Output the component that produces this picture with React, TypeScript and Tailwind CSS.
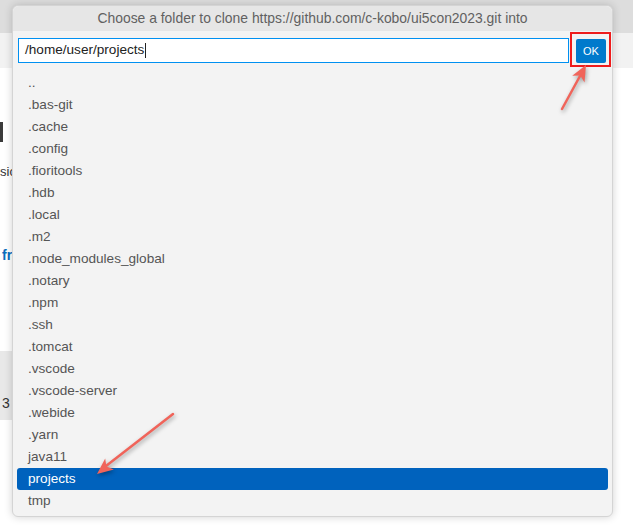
import React from "react";

const folders = [
  "..",
  ".bas-git",
  ".cache",
  ".config",
  ".fioritools",
  ".hdb",
  ".local",
  ".m2",
  ".node_modules_global",
  ".notary",
  ".npm",
  ".ssh",
  ".tomcat",
  ".vscode",
  ".vscode-server",
  ".webide",
  ".yarn",
  "java11",
  "projects",
  "tmp",
];

const Arrows = () => (
  <svg
    className="absolute inset-0 pointer-events-none drop-shadow-[1px_2px_2px_rgba(0,0,0,0.35)]"
    width={633}
    height={532}
    viewBox="0 0 633 532"
  >
    {/* arrow towards OK */}
    <line x1={562} y1={109} x2={580} y2={76} stroke="#f0645a" strokeWidth={2.5} strokeLinecap="round" />
    <polygon points="586,65 584.5,82.4 580.3,75.5 572.2,75.7" fill="#f0645a" />
    {/* arrow towards projects */}
    <line x1={173} y1={414} x2={106} y2={466} stroke="#f0645a" strokeWidth={2.5} strokeLinecap="round" />
    <polygon points="97,474 113.9,469.6 106.4,466.6 105.2,458.6" fill="#f0645a" />
  </svg>
);

const App = () => {
  return (
    <div className="relative w-[633px] h-[532px] overflow-hidden bg-white font-['Liberation_Sans',Arial,sans-serif]">
      {/* page behind the picker */}
      <div className="flex flex-col">
        <div className="h-[33px] bg-[#dddddd]" />
        <div className="h-[35px] bg-[#f2f2f2]" />
        <div className="flex flex-col">
          <div className="mt-[54px] w-[3px] h-[20px] bg-[#3a3a3a]" />
          <div className="mt-[22px] text-[13px] leading-[15px] text-[#333]">sic</div>
          <div className="mt-[68px] ml-[2px] text-[14px] leading-[16px] font-bold text-[#0a6ebd]">fr</div>
          <div className="mt-[88px] h-[69px] w-[40px] bg-[#e8e8e8] flex items-end pb-[6px] pl-[2px] text-[14px] text-[#333]">
            3
          </div>
        </div>
      </div>

      {/* quick pick dialog */}
      <div className="absolute left-[12px] top-[5px] w-[601px] h-[512px] rounded-[6px] bg-[#f3f3f3] shadow-[0_0_8px_rgba(0,0,0,0.18)] border border-[#d4d4d4] flex flex-col">
        <div className="h-[25px] shrink-0 rounded-t-[6px] bg-[#e6e6e6] flex items-center justify-center text-[13.9px] text-[#616161]">
          Choose a folder to clone https://github.com/c-kobo/ui5con2023.git into
        </div>
        <div className="flex items-start gap-[7px] pt-[7px] pl-[5px] pr-[6px]">
          <div className="w-[551px] h-[25px] bg-white border border-[#0090f1] flex items-center pl-[6px] text-[13.6px] text-[#222]">
            /home/user/projects
            <span className="ml-px w-px h-[15px] bg-[#222]" />
          </div>
          <div className="relative">
            <button className="w-[30px] h-[24px] rounded-[2px] bg-[#007acc] text-white text-[11px] font-medium">
              OK
            </button>
            <div className="absolute -left-[6px] -top-[6px] w-[41px] h-[35px] border-2 border-[#ee1c1c]" />
          </div>
        </div>
        <div className="flex flex-col mt-[9px] px-[4px]">
          {folders.map((name) => (
            <div
              key={name}
              className={
                name === "projects"
                  ? "h-[22px] flex items-center pl-[11px] rounded-[3px] bg-[#0062bd] text-white text-[13.6px]"
                  : "h-[22px] flex items-center pl-[11px] text-[#555] text-[13.6px]"
              }
            >
              {name}
            </div>
          ))}
        </div>
      </div>

      <Arrows />
    </div>
  );
};

export default App;
